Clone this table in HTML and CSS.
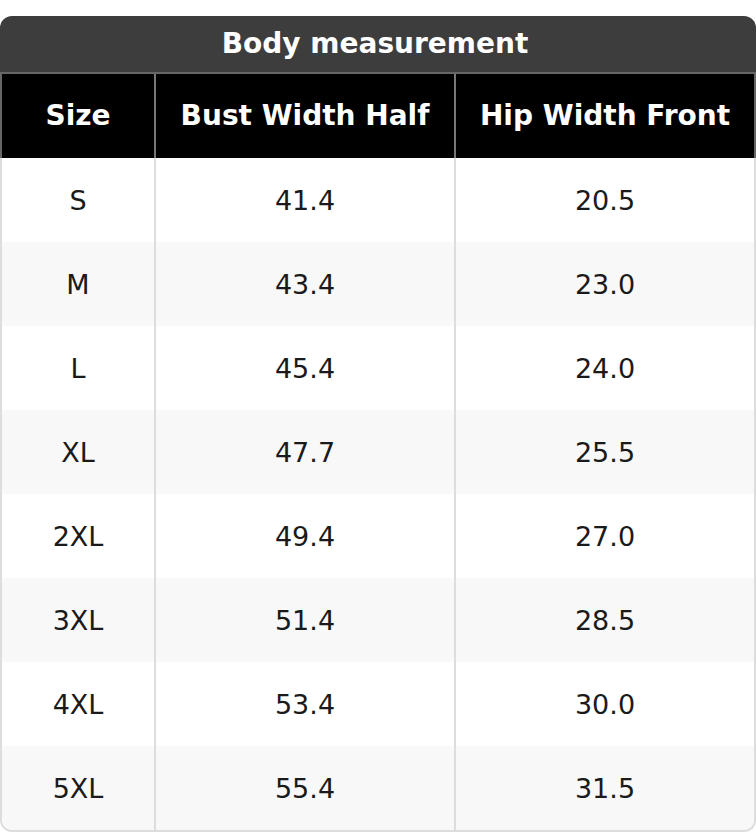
FILE: index.html
```html
<!DOCTYPE html>
<html lang="en">
<head>
<meta charset="utf-8">
<title>Body measurement</title>
<link rel="stylesheet" href="styles.css">
</head>
<body>
<div class="chart">
  <div class="title">Body measurement</div>
  <div class="thead">
    <div class="hcell">Size</div>
    <div class="hcell">Bust Width Half</div>
    <div class="hcell">Hip Width Front</div>
  </div>
  <div class="tbody">
    <div class="row"><div class="cell">S</div><div class="cell">41.4</div><div class="cell">20.5</div></div>
    <div class="row alt"><div class="cell">M</div><div class="cell">43.4</div><div class="cell">23.0</div></div>
    <div class="row"><div class="cell">L</div><div class="cell">45.4</div><div class="cell">24.0</div></div>
    <div class="row alt"><div class="cell">XL</div><div class="cell">47.7</div><div class="cell">25.5</div></div>
    <div class="row"><div class="cell">2XL</div><div class="cell">49.4</div><div class="cell">27.0</div></div>
    <div class="row alt"><div class="cell">3XL</div><div class="cell">51.4</div><div class="cell">28.5</div></div>
    <div class="row"><div class="cell">4XL</div><div class="cell">53.4</div><div class="cell">30.0</div></div>
    <div class="row alt"><div class="cell">5XL</div><div class="cell">55.4</div><div class="cell">31.5</div></div>
  </div>
</div>
</body>
</html>
```
FILE: styles.css
```css
* { box-sizing: border-box; }
html, body { margin: 0; padding: 0; background: #fff; }
body {
  padding-top: 16px;
  font-family: "DejaVu Sans", "Liberation Sans", sans-serif;
}
.chart { width: 756px; }
.title {
  height: 58px;
  background: #3d3d3d;
  color: #fff;
  font-weight: bold;
  font-size: 28px;
  line-height: 56px;
  text-align: center;
  padding-right: 6px;
  border-bottom: 2px solid #666;
  border-radius: 12px 12px 0 0;
}
.thead {
  display: grid;
  grid-template-columns: 154px 300px 298px;
  height: 84px;
  background: #000;
  border-left: 2px solid #666;
  border-right: 2px solid #666;
}
.hcell {
  display: flex;
  align-items: center;
  justify-content: center;
  color: #fff;
  font-weight: bold;
  font-size: 28px;
  padding-bottom: 2px;
}
.hcell:not(:last-child) { border-right: 2px solid #777; }
.tbody {
  border: 2px solid #ddd;
  border-top: 0;
  border-radius: 0 0 12px 12px;
  overflow: hidden;
}
.row {
  display: grid;
  grid-template-columns: 154px 300px 298px;
  height: 84px;
  background: #fff;
}
.row.alt { background: #f8f8f8; }
.cell {
  display: flex;
  align-items: center;
  justify-content: center;
  color: #1a1a1a;
  font-size: 27px;
}
.cell:not(:last-child) { border-right: 2px solid #ddd; }
```
